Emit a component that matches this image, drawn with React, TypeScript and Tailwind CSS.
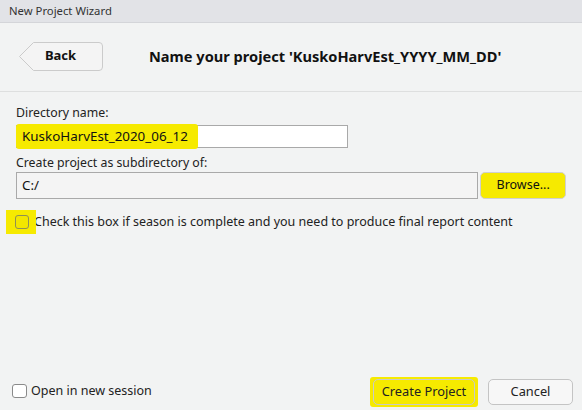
import React from "react";

const font = { fontFamily: '"Segoe UI", "Noto Sans", "Open Sans", sans-serif' };

export default function App() {
  return (
    <div
      className="w-[582px] h-[410px] bg-[#f2f3f3] flex flex-col text-[#1a1a1a] overflow-hidden"
      style={font}
    >
      <div className="h-[23px] shrink-0 bg-[#e2e3e7] border-b border-[#d4d5d9] flex items-center pl-[9px] text-[11.3px] text-[#333]">
        New Project Wizard
      </div>

      <div className="h-[69px] shrink-0 flex items-center border-b border-[#dedfdf]">
        <button className="relative ml-[19px] w-[84px] h-[29px] flex items-center justify-center mt-[-2px]">
          <svg className="absolute inset-0" width="84" height="29" viewBox="0 0 84 29">
            <path
              d="M14.5 0.5 H80 Q83.5 0.5 83.5 4 V25 Q83.5 28.5 80 28.5 H14.5 L0.5 14.5 Z"
              fill="#f4f4f4"
              stroke="#cbcbcb"
            />
          </svg>
          <span className="relative pr-[1px] text-[13px] font-bold text-[#111]">Back</span>
        </button>
        <div className="ml-[46px] text-[14.6px] font-bold text-[#111]">
          Name your project 'KuskoHarvEst_YYYY_MM_DD'
        </div>
      </div>

      <div className="px-4 pt-[12px] flex flex-col">
        <div className="text-[12.3px] leading-[17px] text-[#222]">Directory name:</div>
        <div className="mt-[4px] w-[332px] h-[23px] bg-white border border-[#a9a9a9] relative flex items-center">
          <div className="absolute left-[-1px] top-[-2px] w-[182px] h-[25px] bg-[#f6ea00] rounded-[3px]" />
          <span className="relative pl-[5px] text-[13.4px] text-[#111]">KuskoHarvEst_2020_06_12</span>
        </div>

        <div className="mt-[6px] text-[12.3px] leading-[17px] text-[#222]">Create project as subdirectory of:</div>
        <div className="mt-[1px] flex items-center">
          <div className="w-[464px] h-[27px] bg-[#f4f4f4] border border-[#a9a9a9] flex items-center pl-[5px] text-[13.4px] text-[#111]">
            C:/
          </div>
          <button className="ml-[2px] w-[86px] h-[27px] mt-[-1px] bg-[#f6ea00] border border-[#cfcfcf] rounded-[5px] text-[12.5px] text-[#111]">
            Browse...
          </button>
        </div>

        <div className="mt-[11px] flex items-center">
          <div className="relative ml-[-10px] w-[30px] h-[24px] bg-[#f6ea00] flex items-center justify-center">
            <div className="w-[14px] h-[14px] border border-[#8f8f55] rounded-[3px] bg-[#f2e600] ml-[2px]" />
          </div>
          <span className="text-[12.5px] text-[#222] ml-[-2px]">
            Check this box if season is complete and you need to produce final report content
          </span>
        </div>
      </div>

      <div className="flex-1" />

      <div className="h-[34px] shrink-0 flex items-center pl-[12px] pr-[9px] pb-[2px]">
        <div className="w-[15px] h-[14px] border border-[#8a8a8a] rounded-[3px] bg-white mt-[-2px]" />
        <span className="ml-[4px] text-[12.5px] text-[#222] mt-[-2px]">Open in new session</span>
        <div className="flex-1" />
        <div className="bg-[#f6ea00] rounded-[3px] px-[3px] py-[2px] flex">
          <button className="w-[102px] h-[26px] border border-[#c9c9c9] rounded-[5px] text-[12.8px] text-[#222]">
            Create Project
          </button>
        </div>
        <button className="ml-[10px] w-[85px] h-[26px] bg-[#f7f7f7] border border-[#c4c4c4] rounded-[5px] text-[12.8px] text-[#222]">
          Cancel
        </button>
      </div>
    </div>
  );
}
